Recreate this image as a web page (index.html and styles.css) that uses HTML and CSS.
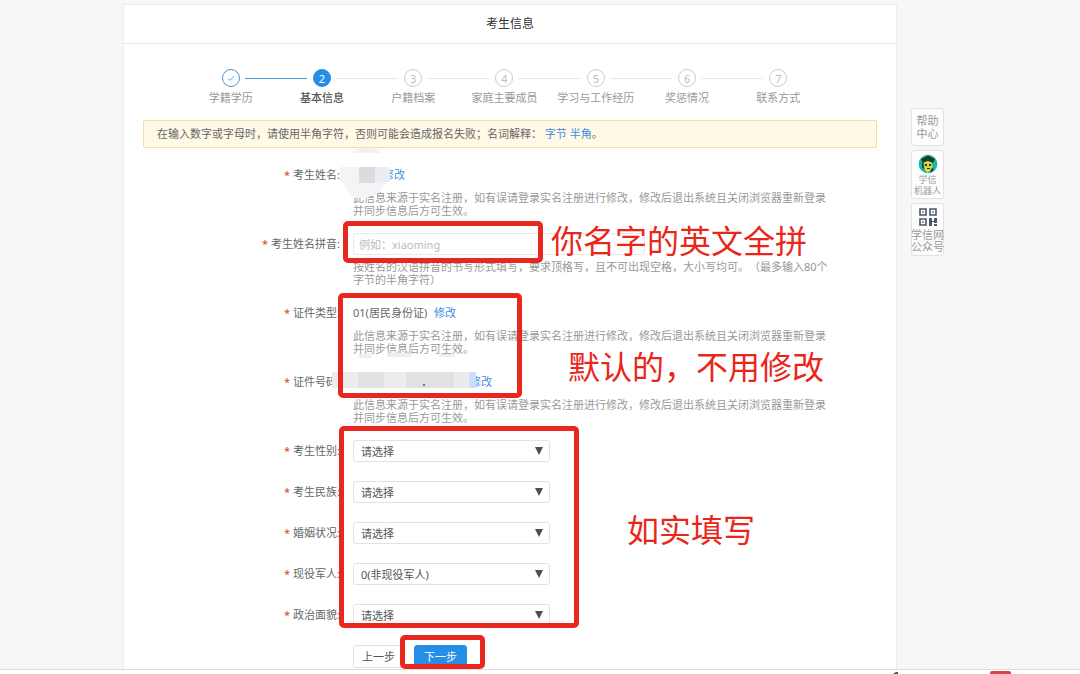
FILE: index.html
```html
<!DOCTYPE html>
<html lang="zh-CN">
<head>
<meta charset="utf-8">
<title>考生信息</title>
<link rel="stylesheet" href="styles.css">
</head>
<body>
<div class="viewport">
  <main class="card">
    <h1 class="card-title">考生信息</h1>
    <ol class="steps">
      <li class="step done"><span class="dot"><svg viewBox="0 0 18 18" width="18" height="18"><path d="M5.5 9.5l2.3 2.1 4.7-4.8" fill="none" stroke="currentColor"/></svg></span><span class="step-name">学籍学历</span></li>
      <li class="step current"><span class="dot">2</span><span class="step-name">基本信息</span></li>
      <li class="step"><span class="dot">3</span><span class="step-name">户籍档案</span></li>
      <li class="step"><span class="dot">4</span><span class="step-name">家庭主要成员</span></li>
      <li class="step"><span class="dot">5</span><span class="step-name">学习与工作经历</span></li>
      <li class="step"><span class="dot">6</span><span class="step-name">奖惩情况</span></li>
      <li class="step"><span class="dot">7</span><span class="step-name">联系方式</span></li>
    </ol>
    <p class="notice">在输入数字或字母时，请使用半角字符，否则可能会造成报名失败；名词解释： <a href="#">字节</a> <a href="#">半角</a>。</p>

    <form class="form">
      <div class="row">
        <span class="label">考生姓名:</span>
        <div class="field">
          <div class="value value-name"><a href="#">修改</a></div>
          <p class="hint">此信息来源于实名注册，如有误请登录实名注册进行修改，修改后退出系统且关闭浏览器重新登录并同步信息后方可生效。</p>
        </div>
      </div>
      <div class="row">
        <label class="label" for="pinyin">考生姓名拼音:</label>
        <div class="field">
          <input class="control text" id="pinyin" type="text" placeholder="例如：xiaoming">
          <p class="hint">按姓名的汉语拼音的书写形式填写，要求顶格写，且不可出现空格，大小写均可。（最多输入80个字节的半角字符）</p>
        </div>
      </div>
      <div class="row">
        <span class="label">证件类型:</span>
        <div class="field">
          <div class="value">01(居民身份证) <a href="#">修改</a></div>
          <p class="hint">此信息来源于实名注册，如有误请登录实名注册进行修改，修改后退出系统且关闭浏览器重新登录并同步信息后方可生效。</p>
        </div>
      </div>
      <div class="row">
        <span class="label">证件号码:</span>
        <div class="field">
          <div class="value value-id"><a href="#">修改</a></div>
          <p class="hint">此信息来源于实名注册，如有误请登录实名注册进行修改，修改后退出系统且关闭浏览器重新登录并同步信息后方可生效。</p>
        </div>
      </div>
      <div class="choices">
        <div class="row">
          <label class="label" for="gender">考生性别:</label>
          <div class="select"><select class="control" id="gender"><option>请选择</option></select></div>
        </div>
        <div class="row">
          <label class="label" for="nation">考生民族:</label>
          <div class="select"><select class="control" id="nation"><option>请选择</option></select></div>
        </div>
        <div class="row">
          <label class="label" for="marriage">婚姻状况:</label>
          <div class="select"><select class="control" id="marriage"><option>请选择</option></select></div>
        </div>
        <div class="row">
          <label class="label" for="army">现役军人:</label>
          <div class="select"><select class="control" id="army"><option>0(非现役军人)</option></select></div>
        </div>
        <div class="row">
          <label class="label" for="politics">政治面貌:</label>
          <div class="select"><select class="control" id="politics"><option>请选择</option></select></div>
        </div>
      </div>
      <div class="actions">
        <button class="btn" type="button">上一步</button>
        <button class="btn primary" type="button">下一步</button>
      </div>
    </form>

    <svg class="mosaic mosaic-top" viewBox="0 0 28 5" width="28" height="5"><path d="M0 3L6 0H21L28 3V5H0z" fill="#f3f1ea"/></svg>
    <svg class="mosaic mosaic-name" viewBox="0 0 52 34" width="52" height="34">
      <path d="M0 0H50Q49 20 34 28L26 31H14L0 14z" fill="#f4f4f6"/>
      <path d="M0 0H19V15H0z" fill="#f4f4f4"/><path d="M19 0H35V16H19z" fill="#dcdce0"/><path d="M35 0H50V15H35z" fill="#ebedf2"/>
    </svg>
    <svg class="mosaic mosaic-hint" viewBox="0 0 96 5" width="96" height="5"><path d="M0 1H12V5H0zM28 0H52V4H28zM80 1H96V4H80z" fill="#eeeeee"/></svg>
    <svg class="mosaic mosaic-id" viewBox="0 0 144 16" width="144" height="16">
      <path d="M0 0H144V16H0z" fill="#ececed"/><path d="M26 0H52V16H26zM74 0H122V16H74z" fill="#e2e2e4"/><path d="M122 0H137V16H122z" fill="#ebebed"/><path d="M137 0H144V16H137z" fill="#ccdcfa"/><path d="M91 12h2v2h-2z" fill="#777"/>
    </svg>

    <div class="mark mark-pinyin"></div>
    <div class="mark mark-id"></div>
    <div class="mark mark-choices"></div>
    <div class="mark mark-next"></div>
    <p class="note note-pinyin">你名字的英文全拼</p>
    <p class="note note-id">默认的，不用修改</p>
    <p class="note note-choices">如实填写</p>
  </main>

  <aside class="side">
    <a class="tool help" href="#">帮助<br>中心</a>
    <a class="tool robot" href="#">
      <svg viewBox="0 0 20 20" width="20" height="20"><circle cx="10" cy="10" r="9.3" fill="#19b9a5"/><path d="M3 5l7-3.5L17 5l-2 4-5-2-5 2z" fill="#173a32"/><path d="M5.5 8.5L10 7l4 2 .5 4L12 17l-3 2-2-3z" fill="#e4d63c"/><path d="M7 10h2v2H7zM11 10h2v2h-2zM9 14h3v1H9z" fill="#26352b"/><path d="M4 8l1.5 1L6 15l-2-1zM14 14l2 1-2 3-2-1z" fill="#17483d"/></svg>
      <span>学信<br>机器人</span>
    </a>
    <a class="tool qr" href="#">
      <svg viewBox="0 0 18 18" width="18" height="18"><g fill="none" stroke="#4e566b" stroke-width="1.6"><path d="M1 1h6v6H1zM11 1h6v6h-6zM1 11h6v6H1z"/></g><path d="M3.2 3.2h1.6v1.6H3.2zM13.2 3.2h1.6v1.6h-1.6zM3.2 13.2h1.6v1.6H3.2zM10 10h3v3h2v-3h3v5h-3v-1h-2v4h-3zM15 16h3v2h-3z" fill="#4e566b"/></svg>
      <span>学信网<br>公众号</span>
    </a>
  </aside>
</div>
<footer class="strip"><svg viewBox="0 0 120 4" width="120" height="4"><path d="M0 4l3-2h2v2z" fill="#555"/><path d="M97 4V3q0-2 2-2h17q2 0 2 2v1z" fill="#dc4048"/></svg></footer>
</body>
</html>
```

FILE: styles.css
```css
* { box-sizing: border-box; }

body {
  margin: 0;
  height: 100vh;
  display: flex;
  flex-direction: column;
  background: #f7f7f8;
  color: #666;
  font: 11px/13px "Noto Sans", "Noto Sans CJK SC", sans-serif;
  text-spacing-trim: space-all;
}

a { color: #3f8ee0; text-decoration: none; }
p { margin: 0; }

.viewport {
  flex: 1;
  min-height: 0;
  overflow: hidden;
  display: flex;
  align-items: flex-start;
  gap: 14px;
  padding: 4px 136px 0 123px;
}

.card {
  position: relative;
  flex: 1;
  min-width: 0;
  background: #fff;
  border: 1px solid #ebebed;
  padding-bottom: 24px;
}

.card-title {
  margin: 0;
  padding: 10px 0;
  border-bottom: 1px solid #e8e8e8;
  color: #333;
  font-size: 12px;
  line-height: 18px;
  font-weight: 400;
  text-align: center;
}

.steps {
  display: grid;
  grid-template-columns: repeat(7, 1fr);
  margin: 0;
  padding: 25px 72px 0 61px;
  list-style: none;
}

.step {
  position: relative;
  display: flex;
  flex-direction: column;
  align-items: center;
  gap: 4px;
  color: #999;
  white-space: nowrap;
}

.step:not(:last-child)::after {
  content: "";
  position: absolute;
  top: 9px;
  left: calc(50% + 14px);
  width: calc(100% - 29px);
  height: 1px;
  background: #e8e8e8;
}

.step.done::after { background: #4a98dc; }

.dot {
  display: flex;
  align-items: center;
  justify-content: center;
  width: 18px;
  height: 18px;
  border: 1px solid #ccc;
  border-radius: 50%;
  color: #bbb;
}

.done .dot { border-color: #4a98dc; color: #4a98dc; }
.current .dot { border-color: #258ee6; background: #258ee6; color: #fff; }
.current .step-name { color: #555; font-weight: 500; }

.notice {
  margin: 16px 19px;
  padding: 6px 13px;
  border: 1px solid #efdfa0;
  border-radius: 2px;
  background: #fff9e6;
  line-height: 14px;
}

.form { padding: 0 19px; }

.row {
  display: grid;
  grid-template-columns: 197px 1fr;
  column-gap: 13px;
  margin-bottom: 16px;
}

.label { line-height: 22px; text-align: right; }
.label::before { content: "*"; margin-right: 3px; color: #d2452a; }

.value { height: 22px; line-height: 22px; }
.value a { margin-left: 4px; }
.value-name { padding-left: 26px; }
.value-id { padding-left: 113px; }

.hint { max-width: 476px; margin-top: 5px; color: #999; }

.control {
  display: block;
  width: 197px;
  height: 22px;
  padding: 0 7px;
  border: 1px solid #dfe2e6;
  border-radius: 3px;
  background: #fff;
  color: #555;
  font: inherit;
  appearance: none;
}

.text { width: 292px; padding: 0 5px; border-color: #e8e8ea; }
.text::placeholder { color: #bbb; }

.select { position: relative; width: 197px; }
.select::after {
  content: "";
  position: absolute;
  top: 7px;
  right: 7px;
  border: 4px solid transparent;
  border-top: 8px solid #4c4f55;
  border-bottom: 0;
  pointer-events: none;
}

.choices .row { margin-bottom: 19px; }

.actions { display: flex; gap: 10px; padding-left: 210px; }

.btn {
  height: 23px;
  padding: 0 8px;
  border: 1px solid #dcdfe3;
  border-radius: 3px;
  background: #fff;
  color: #555;
  font: inherit;
}

.btn.primary { padding: 0 9px; border-color: #258ee6; background: #258ee6; color: #fff; }

.mosaic { position: absolute; }
.mosaic-top { left: 229px; top: 143px; }
.mosaic-name { left: 216px; top: 162px; }
.mosaic-hint { left: 235px; top: 348px; }
.mosaic-id { left: 208px; top: 367px; }

.mark { position: absolute; border: 5px solid #e8281e; border-radius: 5px; }
.mark-pinyin { left: 219px; top: 216px; width: 200px; height: 42px; }
.mark-id { left: 214px; top: 288px; width: 184px; height: 105px; }
.mark-choices { left: 215px; top: 421px; width: 240px; height: 202px; }
.mark-next { left: 276px; top: 630px; width: 85px; height: 34px; }

.note { position: absolute; color: #ea261b; font-size: 32px; line-height: 32px; white-space: nowrap; }
.note-pinyin { left: 427px; top: 220px; }
.note-id { left: 444px; top: 346px; }
.note-choices { left: 503px; top: 509px; }

.side { display: flex; flex-direction: column; gap: 4px; width: 33px; padding-top: 104px; }

.tool {
  display: flex;
  flex-direction: column;
  align-items: center;
  border: 1px solid #e2e2e2;
  border-radius: 3px;
  background: #fdfdfd;
  color: #999;
  text-align: center;
  white-space: nowrap;
}

.help { padding: 5px 0; }
.robot { padding: 3px 0 2px; font-size: 9px; line-height: 11px; }
.qr { padding: 4px 0 2px; gap: 3px; line-height: 12px; }

.strip {
  display: flex;
  justify-content: flex-end;
  height: 5px;
  padding-right: 67px;
  border-top: 1px solid #dcdce0;
  background: #fff;
}
```
